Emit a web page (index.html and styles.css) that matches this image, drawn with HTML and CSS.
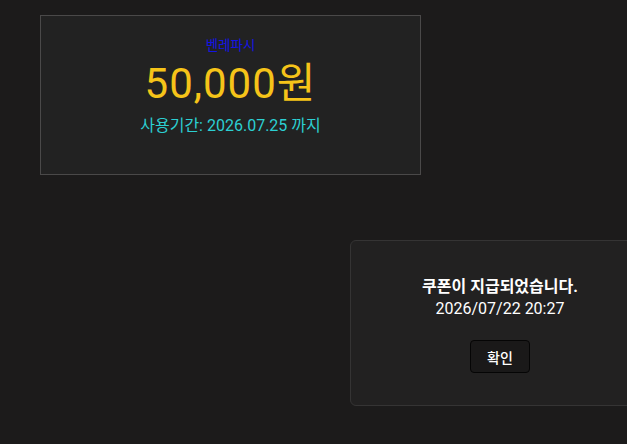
FILE: index.html
```html
<!DOCTYPE html>
<html lang="ko">
<head>
  <meta charset="UTF-8" />
  <meta name="viewport" content="width=device-width, initial-scale=1" />
  <title>쿠폰</title>
  <link rel="stylesheet" href="styles.css">
</head>
<body>

  <div class="coupon">
    <div class="coupon-brand">벤레파시</div>
    <div class="coupon-amount">50,000원</div>
    <div class="coupon-expire">사용기간: 2026.07.25 까지</div>
  </div>

  <div class="alert-box" role="dialog">
    <p class="alert-title">쿠폰이 지급되었습니다.</p>
    <p class="alert-date">2026/07/22 20:27</p>
    <button class="alert-btn" type="button">확인</button>
  </div>

</body>
</html>
```

FILE: styles.css
```css
html, body {
  height: 100%;
}

body {
  margin: 0;
  padding: 15px 40px;
  box-sizing: border-box;
  background: #1c1b1b;
  color: white;
  font-family: Roboto, "Noto Sans CJK KR", sans-serif;
  position: relative;
  overflow: hidden;
}

.coupon {
  width: 381px;
  height: 160px;
  box-sizing: border-box;
  border: 1px solid #4a4949;
  background: #222222;
  display: flex;
  flex-direction: column;
  align-items: center;
  padding-top: 19px;
}

.coupon-brand {
  font-size: 13.5px;
  line-height: 20px;
  color: #1414e6;
}

.coupon-amount {
  font-size: 42px;
  line-height: 48px;
  letter-spacing: 1px;
  color: #f6c419;
  margin-top: 5px;
}

.coupon-expire {
  font-size: 16px;
  line-height: 22px;
  color: #2ccfd2;
  margin-top: 7px;
}

.alert-box {
  position: absolute;
  left: 350px;
  top: 240px;
  width: 300px;
  height: 166px;
  box-sizing: border-box;
  background: #222121;
  border: 1px solid #353434;
  border-radius: 6px;
  text-align: center;
  padding-top: 35px;
}

.alert-title {
  margin: 0;
  font-size: 16px;
  line-height: 22px;
  font-weight: bold;
}

.alert-date {
  margin: 0;
  font-size: 16px;
  line-height: 22px;
}

.alert-btn {
  margin-top: 20px;
  width: 60px;
  height: 33px;
  background: #1a1919;
  color: white;
  border: 1px solid #050505;
  border-radius: 4px;
  font-family: inherit;
  font-size: 14px;
  font-weight: 500;
  cursor: pointer;
}
```
